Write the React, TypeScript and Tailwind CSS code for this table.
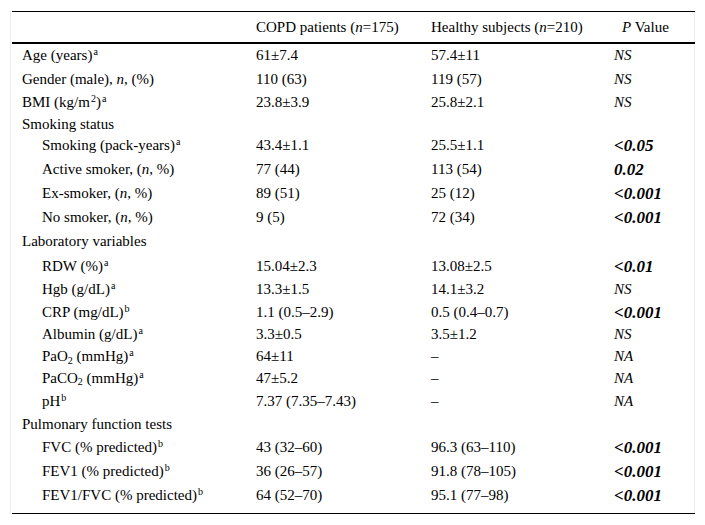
import React from "react";

type Row = {
  label: React.ReactNode;
  indent?: boolean;
  c2?: string;
  c3?: string;
  p?: string;
  bold?: boolean;
  h: number;
  section?: boolean;
};

const Sup = ({ c }: { c: string }) => (
  <sup className="text-[10px] ml-[1px]">{c}</sup>
);
const Sub = ({ c }: { c: string }) => <sub className="text-[10px]">{c}</sub>;
const I = ({ c }: { c: string }) => <i>{c}</i>;

const rows: Row[] = [
  { label: <>Age (years)<Sup c="a" /></>, c2: "61±7.4", c3: "57.4±11", p: "NS", h: 23 },
  { label: <>Gender (male), <I c="n" />, (%)</>, c2: "110 (63)", c3: "119 (57)", p: "NS", h: 24 },
  { label: <>BMI (kg/m<Sup c="2" />)<Sup c="a" /></>, c2: "23.8±3.9", c3: "25.8±2.1", p: "NS", h: 23 },
  { label: "Smoking status", section: true, h: 20 },
  { label: <>Smoking (pack-years)<Sup c="a" /></>, indent: true, c2: "43.4±1.1", c3: "25.5±1.1", p: "<0.05", bold: true, h: 23 },
  { label: <>Active smoker, (<I c="n" />, %)</>, indent: true, c2: "77 (44)", c3: "113 (54)", p: "0.02", bold: true, h: 24 },
  { label: <>Ex-smoker, (<I c="n" />, %)</>, indent: true, c2: "89 (51)", c3: "25 (12)", p: "<0.001", bold: true, h: 24 },
  { label: <>No smoker, (<I c="n" />, %)</>, indent: true, c2: "9 (5)", c3: "72 (34)", p: "<0.001", bold: true, h: 24 },
  { label: "Laboratory variables", section: true, h: 25 },
  { label: <>RDW (%)<Sup c="a" /></>, indent: true, c2: "15.04±2.3", c3: "13.08±2.5", p: "<0.01", bold: true, h: 24 },
  { label: <>Hgb (g/dL)<Sup c="a" /></>, indent: true, c2: "13.3±1.5", c3: "14.1±3.2", p: "NS", h: 23 },
  { label: <>CRP (mg/dL)<Sup c="b" /></>, indent: true, c2: "1.1 (0.5–2.9)", c3: "0.5 (0.4–0.7)", p: "<0.001", bold: true, h: 22 },
  { label: <>Albumin (g/dL)<Sup c="a" /></>, indent: true, c2: "3.3±0.5", c3: "3.5±1.2", p: "NS", h: 23 },
  { label: <>PaO<Sub c="2" /> (mmHg)<Sup c="a" /></>, indent: true, c2: "64±11", c3: "–", p: "NA", h: 21 },
  { label: <>PaCO<Sub c="2" /> (mmHg)<Sup c="a" /></>, indent: true, c2: "47±5.2", c3: "–", p: "NA", h: 22 },
  { label: <>pH<Sup c="b" /></>, indent: true, c2: "7.37 (7.35–7.43)", c3: "–", p: "NA", h: 24 },
  { label: "Pulmonary function tests", section: true, h: 23 },
  { label: <>FVC (% predicted)<Sup c="b" /></>, indent: true, c2: "43 (32–60)", c3: "96.3 (63–110)", p: "<0.001", bold: true, h: 23 },
  { label: <>FEV1 (% predicted)<Sup c="b" /></>, indent: true, c2: "36 (26–57)", c3: "91.8 (78–105)", p: "<0.001", bold: true, h: 24 },
  { label: <>FEV1/FVC (% predicted)<Sup c="b" /></>, indent: true, c2: "64 (52–70)", c3: "95.1 (77–98)", p: "<0.001", bold: true, h: 24 },
];

export default function App() {
  return (
    <div className="w-[705px] h-[525px] bg-white text-black pt-[11px] font-['Liberation_Serif','Times_New_Roman',serif]">
      <div className="ml-[10px] w-[685px] border-x border-[#ececec]">
        <div className="ml-px w-[683px] text-[15px]">
          <div className="grid grid-cols-[244px_175px_183px_81px] h-[33px] border-t border-b-2 border-black items-center">
            <div />
            <div>
              COPD patients (<i>n</i>=175)
            </div>
            <div>
              Healthy subjects (<i>n</i>=210)
            </div>
            <div className="pl-[8px]">
              <i>P</i> Value
            </div>
          </div>
          <div className="pb-[6px] border-b border-black">
            {rows.map((r, i) => (
              <div
                key={i}
                className="grid grid-cols-[244px_175px_183px_81px] items-center leading-none"
                style={{ height: r.h }}
              >
                <div className={r.indent ? "pl-[30px]" : "pl-[10px]"}>{r.label}</div>
                <div>{r.c2}</div>
                <div>{r.c3}</div>
                <div>
                  {r.p ? (
                    r.bold ? (
                      <span className="italic font-bold text-[17px]">{r.p}</span>
                    ) : (
                      <span className="italic">{r.p}</span>
                    )
                  ) : null}
                </div>
              </div>
            ))}
          </div>
        </div>
      </div>
    </div>
  );
}
